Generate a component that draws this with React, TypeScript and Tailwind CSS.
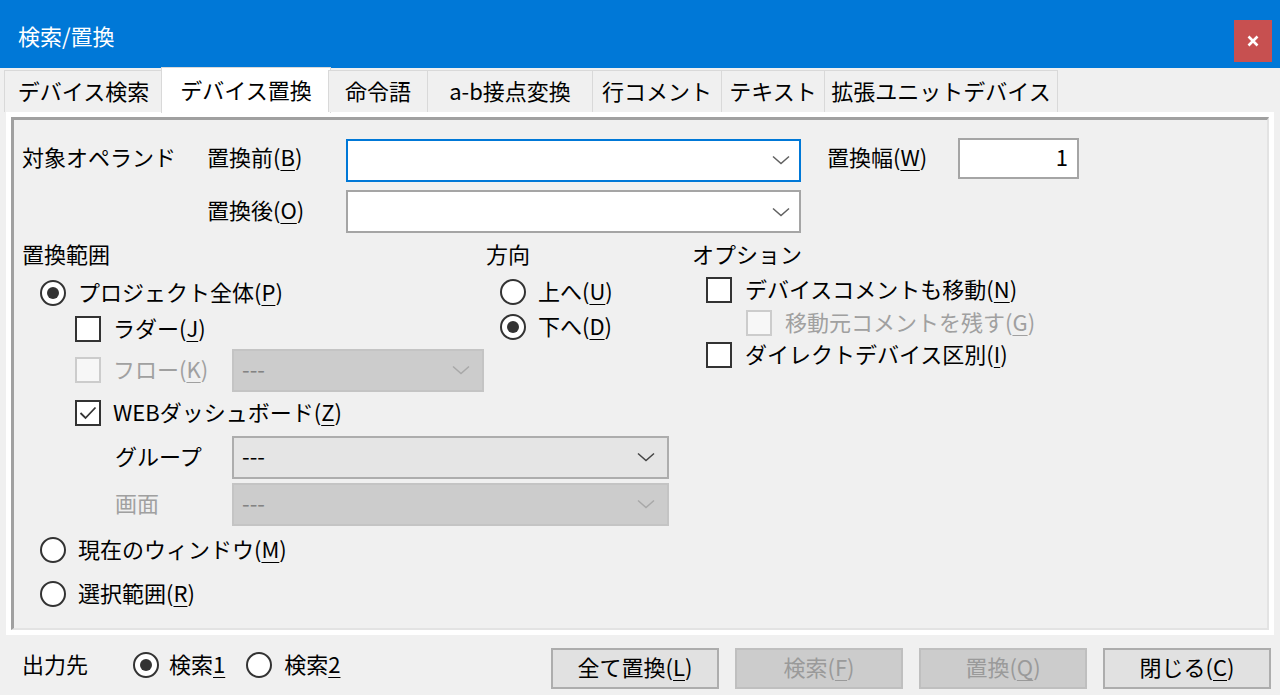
import React from 'react';

const FONT = { fontFamily: '"Noto Sans CJK JP", "Noto Sans", sans-serif' };

function Acc({ text, k, paren = true }: { text: string; k: string; paren?: boolean }) {
  return (
    <span className="whitespace-nowrap pb-[4px]">
      {text}
      {paren && '('}
      <span className="underline decoration-1 underline-offset-[4px]">{k}</span>
      {paren && ')'}
    </span>
  );
}

function Chevron({ color = '#555' }: { color?: string }) {
  return (
    <svg width="18" height="10" viewBox="0 0 18 10" className="shrink-0">
      <polyline points="1,1.5 9,8.5 17,1.5" fill="none" stroke={color} strokeWidth="1.5" />
    </svg>
  );
}

function Radio({ checked }: { checked?: boolean }) {
  return (
    <span className="w-[26px] h-[26px] rounded-full border-2 border-[#333] bg-white flex items-center justify-center shrink-0">
      {checked && <span className="w-[12px] h-[12px] rounded-full bg-[#333]" />}
    </span>
  );
}

function Check({ checked, disabled }: { checked?: boolean; disabled?: boolean }) {
  return (
    <span
      className={`w-[26px] h-[26px] border-2 flex items-center justify-center shrink-0 ${
        disabled ? 'border-[#cccccc] bg-[#f7f7f7]' : 'border-[#333] bg-white'
      }`}
    >
      {checked && (
        <svg width="18" height="14" viewBox="0 0 18 14">
          <polyline points="1.5,7 6.5,12 16.5,1.5" fill="none" stroke="#333" strokeWidth="1.8" />
        </svg>
      )}
    </span>
  );
}

function Combo({ w, focused }: { w: string; focused?: boolean }) {
  return (
    <div
      className={`${w} h-[43px] bg-white border-2 flex items-center justify-end pr-[9px] ${
        focused ? 'border-[#0078d7]' : 'border-[#a5a5a5]'
      }`}
    >
      <Chevron color="#606060" />
    </div>
  );
}

function Dropdown({ w, disabled }: { w: string; disabled?: boolean }) {
  return (
    <div
      className={`${w} h-[43px] border-2 flex items-center justify-between pl-[8px] pr-[12px] ${
        disabled ? 'bg-[#cccccc] border-[#c4c4c4] text-[#838383]' : 'bg-[#e5e5e5] border-[#adadad] text-black'
      }`}
    >
      <span className="leading-none pb-[4px]">---</span>
      <Chevron color={disabled ? '#a8a8a8' : '#444'} />
    </div>
  );
}

function Button({ children, disabled }: { children: React.ReactNode; disabled?: boolean }) {
  return (
    <div
      className={`w-[168px] h-[41px] border-2 flex items-center justify-center ${
        disabled ? 'bg-[#cccccc] border-[#bfbfbf] text-[#9a9a9a]' : 'bg-[#e1e1e1] border-[#adadad] text-black'
      }`}
    >
      {children}
    </div>
  );
}

const tabs = [
  { label: 'デバイス検索', w: 'w-[159px]' },
  { label: 'デバイス置換', w: 'w-[170px]', active: true },
  { label: '命令語', w: 'w-[100px]' },
  { label: 'a-b接点変換', w: 'w-[166px]' },
  { label: '行コメント', w: 'w-[130px]' },
  { label: 'テキスト', w: 'w-[104px]' },
  { label: '拡張ユニットデバイス', w: 'w-[234px]' },
];

export default function App() {
  return (
    <div className="w-[1280px] h-[695px] bg-[#f0f0f0] flex flex-col text-[22px] text-black overflow-hidden" style={FONT}>
      {/* title bar */}
      <div className="h-[68px] bg-[#0078d7] flex justify-between shrink-0">
        <span className="text-white text-[22px] pl-[18px] pt-[24px] leading-none">検索/置換</span>
        <div className="w-[38px] h-[42px] bg-[#c75050] mt-[20px] mr-[8px] flex items-center justify-center">
          <svg width="12" height="12" viewBox="0 0 12 12">
            <path d="M1.5 1.5 L10.5 10.5 M10.5 1.5 L1.5 10.5" stroke="white" strokeWidth="2.6" />
          </svg>
        </div>
      </div>

      {/* tabs */}
      <div className="h-[44px] flex items-end pl-[4px] shrink-0 relative z-10">
        {tabs.map(t =>
          t.active ? (
            <div
              key={t.label}
              className={`${t.w} h-[46px] -mx-[2px] -mb-[1px] bg-white border-x border-t border-[#d9d9d9] flex items-center justify-center pb-[4px] leading-none`}
            >
              {t.label}
            </div>
          ) : (
            <div
              key={t.label}
              className={`${t.w} h-[42px] bg-[#f0f0f0] border-l border-t border-r border-[#d9d9d9] -ml-px first:ml-0 flex items-center justify-center pb-[3px] leading-none`}
            >
              {t.label}
            </div>
          )
        )}
      </div>

      {/* panel */}
      <div className="h-[523px] mx-[6px] border-[5px] border-white shrink-0">
        <div className="h-full border-t-[3px] border-l-[3px] border-[#a0a0a0] border-b-2 border-r-2 border-b-[#e3e3e3] border-r-[#e3e3e3] pl-[8px] pt-[17px] flex flex-col">
          {/* row 1 */}
          <div className="flex items-center h-[46px]">
            <span className="w-[185px] leading-none -mt-[4px] pb-[4px]">対象オペランド</span>
            <span className="w-[139px] leading-none -mt-[4px] flex"><Acc text="置換前" k="B" /></span>
            <Combo w="w-[455px]" focused />
            <span className="w-[131px] ml-[26px] leading-none -mt-[4px] flex"><Acc text="置換幅" k="W" /></span>
            <div className="w-[121px] h-[41px] bg-white border-2 border-[#a5a5a5] flex items-center justify-end pr-[9px] -mt-[4px] pb-[4px] leading-none">
              1
            </div>
          </div>
          {/* row 2 */}
          <div className="flex items-center h-[43px] mt-[7px]">
            <span className="w-[185px]" />
            <span className="w-[139px] leading-none -mt-[2px] flex"><Acc text="置換後" k="O" /></span>
            <Combo w="w-[455px]" />
          </div>

          {/* three column block */}
          <div className="flex mt-[7px]">
            {/* range (top part) */}
            <div className="w-[464px] flex flex-col">
              <div className="h-[30px] flex items-center leading-none pb-[4px]">置換範囲</div>
              <div className="h-[36px] mt-[5px] flex items-center ml-[18px] gap-[12px] leading-none">
                <Radio checked />
                <Acc text="プロジェクト全体" k="P" />
              </div>
              <div className="h-[36px] flex items-center ml-[53px] gap-[12px] leading-none">
                <Check />
                <Acc text="ラダー" k="J" />
              </div>
              <div className="h-[44px] mt-[1px] flex items-center ml-[53px] leading-none">
                <Check disabled />
                <span className="w-[131px] pl-[12px] text-[#a0a0a0] flex"><Acc text="フロー" k="K" /></span>
                <Dropdown w="w-[252px]" disabled />
              </div>
            </div>
            {/* direction */}
            <div className="w-[206px] flex flex-col">
              <div className="h-[30px] flex items-center leading-none pb-[4px]">方向</div>
              <div className="h-[35px] mt-[4px] flex items-center ml-[14px] gap-[12px] leading-none">
                <Radio />
                <Acc text="上へ" k="U" />
              </div>
              <div className="h-[35px] flex items-center ml-[14px] gap-[12px] leading-none">
                <Radio checked />
                <Acc text="下へ" k="D" />
              </div>
            </div>
            {/* options */}
            <div className="flex flex-col">
              <div className="h-[30px] flex items-center leading-none pb-[4px]">オプション</div>
              <div className="h-[34px] mt-[3px] flex items-center ml-[14px] gap-[13px] leading-none">
                <Check />
                <Acc text="デバイスコメントも移動" k="N" />
              </div>
              <div className="h-[32px] flex items-center ml-[54px] gap-[13px] leading-none text-[#a0a0a0]">
                <Check disabled />
                <Acc text="移動元コメントを残す" k="G" />
              </div>
              <div className="h-[32px] flex items-center ml-[14px] gap-[13px] leading-none">
                <Check />
                <Acc text="ダイレクトデバイス区別" k="I" />
              </div>
            </div>
          </div>

          {/* range (lower part) */}
          <div className="flex flex-col">
            <div className="h-[36px] mt-[3px] flex items-center ml-[53px] gap-[12px] leading-none">
              <Check checked />
              <Acc text="WEBダッシュボード" k="Z" />
            </div>
            <div className="h-[44px] mt-[4px] flex items-center ml-[93px] leading-none">
              <span className="w-[117px] pb-[4px]">グループ</span>
              <Dropdown w="w-[437px]" />
            </div>
            <div className="h-[44px] mt-[3px] flex items-center ml-[93px] leading-none">
              <span className="w-[117px] text-[#a0a0a0] pb-[4px]">画面</span>
              <Dropdown w="w-[437px]" disabled />
            </div>
            <div className="h-[36px] mt-[6px] flex items-center ml-[18px] gap-[12px] leading-none">
              <Radio />
              <Acc text="現在のウィンドウ" k="M" />
            </div>
            <div className="h-[36px] mt-[8px] flex items-center ml-[18px] gap-[12px] leading-none">
              <Radio />
              <Acc text="選択範囲" k="R" />
            </div>
          </div>
        </div>
      </div>

      {/* bottom bar */}
      <div className="flex-1 flex items-center pl-[22px] pr-[9px] leading-none">
        <span className="w-[111px] pb-[4px]">出力先</span>
        <div className="flex items-center gap-[10px]">
          <Radio checked />
          <Acc text="検索" k="1" paren={false} />
        </div>
        <div className="flex items-center gap-[12px] ml-[21px]">
          <Radio />
          <Acc text="検索" k="2" paren={false} />
        </div>
        <div className="ml-auto flex items-center gap-[16px] mt-[6px]">
          <Button><Acc text="全て置換" k="L" /></Button>
          <Button disabled><Acc text="検索" k="F" /></Button>
          <Button disabled><Acc text="置換" k="Q" /></Button>
          <Button><Acc text="閉じる" k="C" /></Button>
        </div>
      </div>
    </div>
  );
}
